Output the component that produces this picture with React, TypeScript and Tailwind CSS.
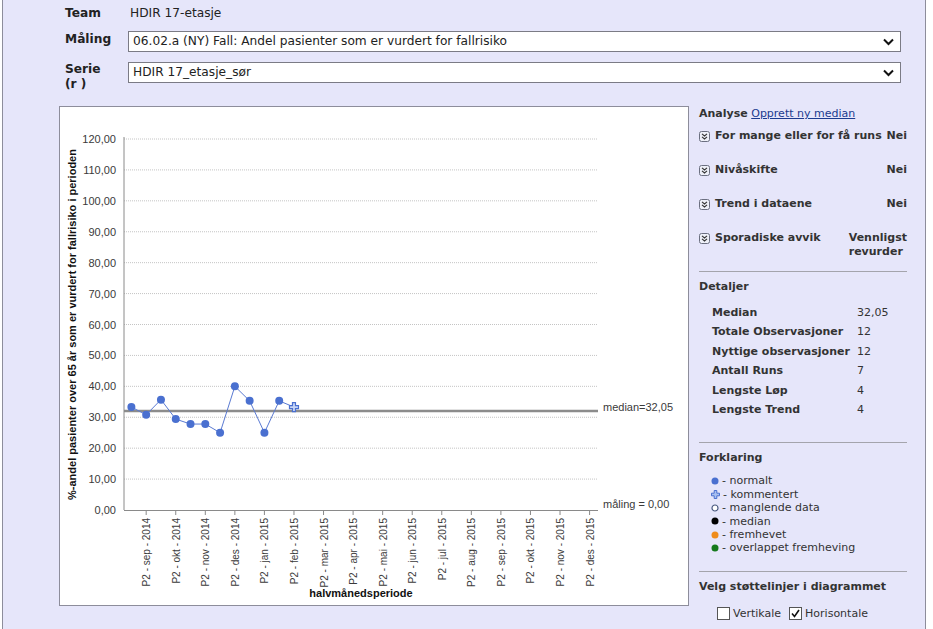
import React from 'react';

// ============================================
// DATA
// ============================================

const values = [33.3, 30.8, 35.7, 29.4, 27.8, 27.8, 25.0, 40.0, 35.3, 25.0, 35.3, 33.3];
const months = [
  'sep - 2014', 'okt - 2014', 'nov - 2014', 'des - 2014',
  'jan - 2015', 'feb - 2015', 'mar - 2015', 'apr - 2015', 'mai - 2015', 'jun - 2015',
  'jul - 2015', 'aug - 2015', 'sep - 2015', 'okt - 2015', 'nov - 2015', 'des - 2015',
];

const analysis = [
  { label: 'For mange eller for få runs', value: 'Nei' },
  { label: 'Nivåskifte', value: 'Nei' },
  { label: 'Trend i dataene', value: 'Nei' },
];

const details = [
  ['Median', '32,05'],
  ['Totale Observasjoner', '12'],
  ['Nyttige observasjoner', '12'],
  ['Antall Runs', '7'],
  ['Lengste Løp', '4'],
  ['Lengste Trend', '4'],
];

// plot geometry in page coordinates
const LEFT = 124;
const RIGHT = 597;
const TOP = 140;
const BOTTOM = 511;
const yOf = (v: number) => BOTTOM - v * ((BOTTOM - TOP) / 120);
const xOf = (i: number) => 131.4 + i * 14.78;

const font = { fontFamily: '"DejaVu Sans", Verdana, sans-serif' };

// ============================================
// SMALL PARTS
// ============================================

const SelectBox: React.FC<{ text: string }> = ({ text }) => (
  <div className="flex h-[21px] w-[773px] items-center justify-between border border-[#7b7b85] bg-white pl-[4px] pr-[6px]">
    <span className="text-[12.2px] text-[#222]">{text}</span>
    <svg width="11" height="8" viewBox="0 0 11 8">
      <polyline points="1,1.5 5.5,6 10,1.5" fill="none" stroke="#111" strokeWidth="2" />
    </svg>
  </div>
);

const ExpandIcon = () => (
  <svg width="11" height="11" viewBox="0 0 11 11" className="shrink-0">
    <rect x="0.5" y="0.5" width="10" height="10" rx="2" fill="#eef0f8" stroke="#6b6f80" />
    <polyline points="3,2.8 5.5,5 8,2.8" fill="none" stroke="#333" strokeWidth="1.1" />
    <polyline points="3,5.8 5.5,8 8,5.8" fill="none" stroke="#333" strokeWidth="1.1" />
  </svg>
);

const Dot: React.FC<{ color: string; hollow?: boolean }> = ({ color, hollow }) => (
  <svg width="8" height="8" viewBox="0 0 8 8" className="shrink-0">
    <circle cx="4" cy="4" r={hollow ? 3 : 3.5} fill={hollow ? '#fff' : color} stroke={hollow ? color : 'none'} strokeWidth="1.2" />
  </svg>
);

const CrossMark = () => (
  <svg width="9" height="9" viewBox="0 0 9 9" className="shrink-0">
    <path d="M3.2 0.5h2.6v2.7h2.7v2.6H5.8v2.7H3.2V5.8H0.5V3.2h2.7z" fill="#a9c0f0" stroke="#4a70d0" strokeWidth="1" />
  </svg>
);

// ============================================
// CHART
// ============================================

const Chart = () => {
  const grid = [10, 20, 30, 40, 50, 60, 70, 80, 90, 100, 110, 120];
  const ticks = [0, 10, 20, 30, 40, 50, 60, 70, 80, 90, 100, 110, 120];
  const median = 32.05;
  const points = values.map((v, i) => `${xOf(i)},${yOf(v)}`).join(' ');

  return (
    <svg width="628" height="498" viewBox="60 108 628 498" className="block">
      {grid.map((g) => (
        <line key={g} x1={LEFT} x2={RIGHT} y1={yOf(g)} y2={yOf(g)} stroke="#c4c4c4" strokeDasharray="1 1" />
      ))}
      {ticks.map((t) => (
        <text
          key={t}
          x={116}
          y={yOf(t) + 4}
          textAnchor="end"
          fontSize="11"
          fill="#3a3a3a"
          fontFamily="Liberation Sans, Arial, sans-serif"
        >
          {t.toFixed(2).replace('.', ',')}
        </text>
      ))}
      <line x1={LEFT} x2={LEFT} y1={TOP - 2} y2={BOTTOM} stroke="#8a8a8a" />
      <line x1={LEFT} x2={RIGHT + 1} y1={BOTTOM + 0.5} y2={BOTTOM + 0.5} stroke="#8a8a8a" />
      {months.map((m, k) => {
        const x = xOf(k * 2 + 1);
        return (
          <g key={k}>
            <line x1={x} x2={x} y1={BOTTOM} y2={BOTTOM + 5} stroke="#8a8a8a" />
            <text
              transform={`translate(${x + 4}, 519) rotate(-90)`}
              textAnchor="end"
              fontSize="10"
              fill="#3a3a3a"
              fontFamily="Liberation Sans, Arial, sans-serif"
            >
              {`P2 - ${m}`}
            </text>
          </g>
        );
      })}
      <line x1={LEFT} x2={RIGHT + 1} y1={yOf(median)} y2={yOf(median)} stroke="#8c8c8c" strokeWidth="2.5" />
      <text x={603} y={yOf(median)} fontSize="11" fill="#3a3a3a" fontFamily="Liberation Sans, Arial, sans-serif">
        median=32,05
      </text>
      <text x={603} y={509} fontSize="11" fill="#3a3a3a" fontFamily="Liberation Sans, Arial, sans-serif">
        måling = 0,00
      </text>
      <polyline points={points} fill="none" stroke="#5a7ad2" strokeWidth="1" />
      {values.slice(0, 11).map((v, i) => (
        <circle key={i} cx={xOf(i)} cy={yOf(v)} r="4" fill="#4a70d0" />
      ))}
      <path
        transform={`translate(${xOf(11) - 5}, ${yOf(values[11]) - 5})`}
        d="M3.5 0.5h3v3h3v3h-3v3h-3v-3h-3v-3h3z"
        fill="#c8d6f6"
        stroke="#4a70d0"
        strokeWidth="1.2"
      />
      <text
        x={361}
        y={598}
        textAnchor="middle"
        fontSize="11"
        fontWeight="bold"
        fill="#111"
        fontFamily="Liberation Sans, Arial, sans-serif"
      >
        halvmånedsperiode
      </text>
      <text
        transform={`translate(76, ${(TOP + BOTTOM) / 2}) rotate(-90)`}
        textAnchor="middle"
        fontSize="11"
        fontWeight="bold"
        fill="#111"
        fontFamily="Liberation Sans, Arial, sans-serif"
      >
        %-andel pasienter over 65 år som er vurdert for fallrisiko i perioden
      </text>
    </svg>
  );
};

// ============================================
// SIDE PANEL
// ============================================

const SidePanel = () => (
  <div className="w-[208px] pt-[1px] text-[11px] leading-[14px] text-[#333]">
    <div>
      <span className="font-bold">Analyse</span>{' '}
      <a className="text-[#1b3b8f] underline">Opprett ny median</a>
    </div>

    <div className="mt-[8px] flex flex-col gap-[20px]">
      {analysis.map((row) => (
        <div key={row.label} className="flex items-center justify-between">
          <div className="flex items-center gap-[5px]">
            <ExpandIcon />
            <span className="font-bold">{row.label}</span>
          </div>
          <span className="font-bold">{row.value}</span>
        </div>
      ))}
      <div className="flex items-start justify-between">
        <div className="flex items-center gap-[5px]">
          <ExpandIcon />
          <span className="font-bold">Sporadiske avvik</span>
        </div>
        <span className="font-bold">
          Vennligst
          <br />
          revurder
        </span>
      </div>
    </div>

    <div className="mt-[12px] border-t border-[#a4a4ac]" />

    <div className="mt-[8px] font-bold">Detaljer</div>
    <div className="mt-[9px] pl-[13px]">
      {details.map(([k, v]) => (
        <div key={k} className="flex leading-[19.4px]">
          <span className="w-[145px] font-bold">{k}</span>
          <span>{v}</span>
        </div>
      ))}
    </div>

    <div className="mt-[23px] border-t border-[#a4a4ac]" />

    <div className="mt-[8px] font-bold">Forklaring</div>
    <div className="mt-[9px] pl-[12px] leading-[13.4px]">
      <div className="flex items-center gap-[3px]">
        <Dot color="#4a70d0" />
        <span>- normalt</span>
      </div>
      <div className="flex items-center gap-[3px]">
        <CrossMark />
        <span>- kommentert</span>
      </div>
      <div className="flex items-center gap-[3px]">
        <Dot color="#4a5a80" hollow />
        <span>- manglende data</span>
      </div>
      <div className="flex items-center gap-[3px]">
        <Dot color="#000" />
        <span>- median</span>
      </div>
      <div className="flex items-center gap-[3px]">
        <Dot color="#ef8c1a" />
        <span>- fremhevet</span>
      </div>
      <div className="flex items-center gap-[3px]">
        <Dot color="#157a1c" />
        <span>- overlappet fremheving</span>
      </div>
    </div>

    <div className="mt-[16px] border-t border-[#a4a4ac]" />

    <div className="mt-[8px] font-bold">Velg støttelinjer i diagrammet</div>
    <div className="mt-[13px] flex items-center pl-[18px]">
      <span className="h-[13px] w-[13px] border border-[#555] bg-white" />
      <span className="ml-[3px]">Vertikale</span>
      <span className="ml-[8px] flex h-[13px] w-[13px] items-center justify-center border border-[#555] bg-white">
        <svg width="9" height="9" viewBox="0 0 9 9">
          <polyline points="1,4.5 3.5,7.5 8,1" fill="none" stroke="#111" strokeWidth="1.6" />
        </svg>
      </span>
      <span className="ml-[3px]">Horisontale</span>
    </div>
  </div>
);

// ============================================
// PAGE
// ============================================

export default function App() {
  return (
    <div className="min-h-[629px] bg-white" style={font}>
      <div className="ml-[2px] min-h-[629px] w-[924px] border-x border-[#8d8d9b] bg-[#e6e6fa] text-[#222]">
        <div className="pl-[62px] pt-[4px] text-[12.2px]">
          <div className="flex h-[18px] items-center">
            <span className="w-[65px] font-bold">Team</span>
            <span>HDIR 17-etasje</span>
          </div>
          <div className="mt-[9px] flex">
            <span className="w-[63px] pt-[1px] font-bold leading-[15px]">Måling</span>
            <SelectBox text="06.02.a (NY) Fall: Andel pasienter som er vurdert for fallrisiko" />
          </div>
          <div className="mt-[10px] flex">
            <span className="w-[63px] font-bold leading-[15px]">
              Serie
              <br />
              (r )
            </span>
            <SelectBox text="HDIR 17_etasje_sør" />
          </div>
        </div>

        <div className="mt-[14px] flex pl-[56px]">
          <div className="h-[500px] w-[630px] border border-[#8d8d9b] bg-white">
            <Chart />
          </div>
          <div className="ml-[10px]">
            <SidePanel />
          </div>
        </div>
      </div>
    </div>
  );
}
